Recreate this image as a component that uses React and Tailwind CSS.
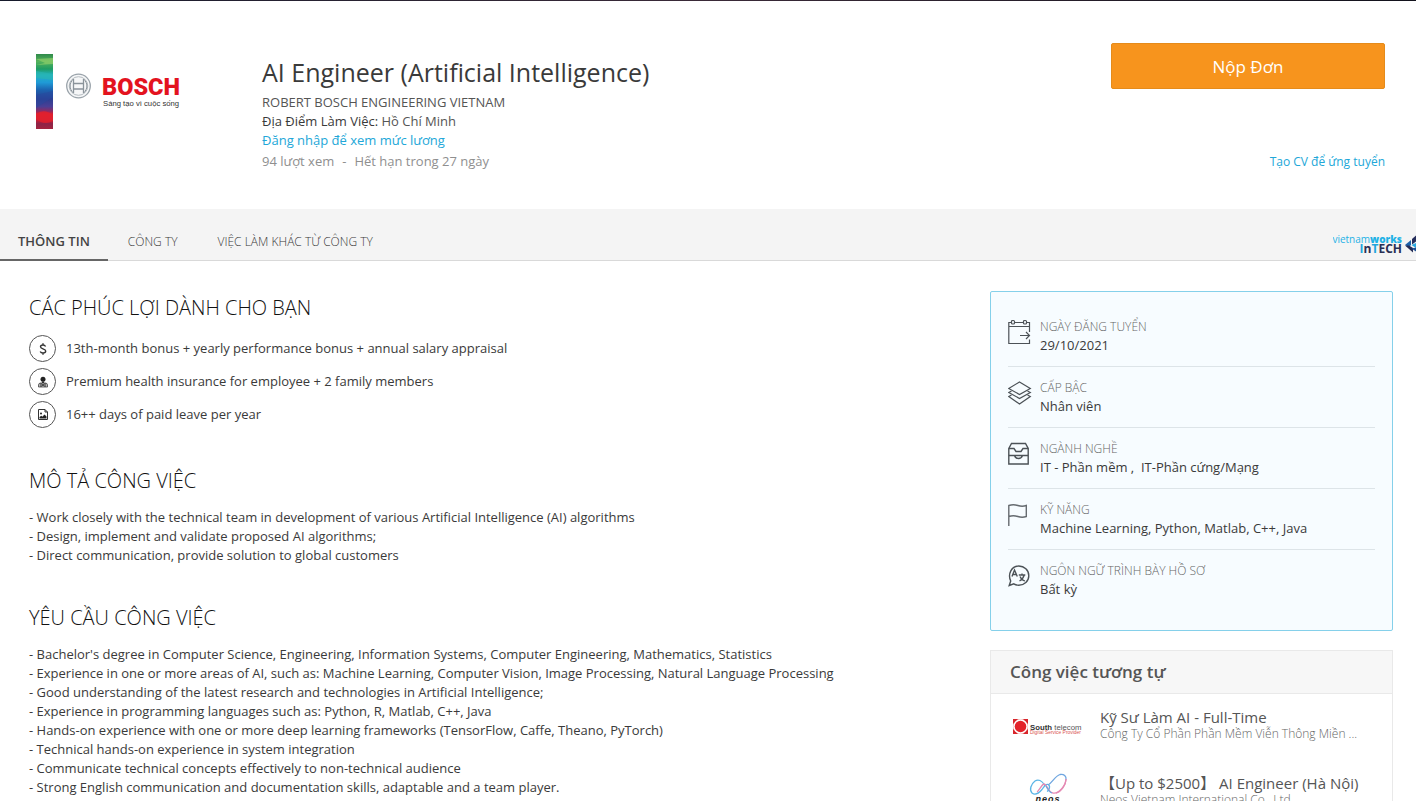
import React from 'react';

const benefits = [
  { icon: 'dollar', text: '13th-month bonus + yearly performance bonus + annual salary appraisal' },
  { icon: 'doctor', text: 'Premium health insurance for employee + 2 family members' },
  { icon: 'picture', text: '16++ days of paid leave per year' },
];

const description = [
  '- Work closely with the technical team in development of various Artificial Intelligence (AI) algorithms',
  '- Design, implement and validate proposed AI algorithms;',
  '- Direct communication, provide solution to global customers',
];

const requirements = [
  "- Bachelor's degree in Computer Science, Engineering, Information Systems, Computer Engineering, Mathematics, Statistics",
  '- Experience in one or more areas of AI, such as: Machine Learning, Computer Vision, Image Processing, Natural Language Processing',
  '- Good understanding of the latest research and technologies in Artificial Intelligence;',
  '- Experience in programming languages such as: Python, R, Matlab, C++, Java',
  '- Hands-on experience with one or more deep learning frameworks (TensorFlow, Caffe, Theano, PyTorch)',
  '- Technical hands-on experience in system integration',
  '- Communicate technical concepts effectively to non-technical audience',
  '- Strong English communication and documentation skills, adaptable and a team player.',
];

const facts = [
  { icon: 'calendar', label: 'NGÀY ĐĂNG TUYỂN', value: '29/10/2021' },
  { icon: 'layers', label: 'CẤP BẬC', value: 'Nhân viên' },
  { icon: 'drawer', label: 'NGÀNH NGHỀ', value: 'IT - Phần mềm ,\u00a0 IT-Phần cứng/Mạng' },
  { icon: 'flag', label: 'KỸ NĂNG', value: 'Machine Learning, Python, Matlab, C++, Java' },
  { icon: 'language', label: 'NGÔN NGỮ TRÌNH BÀY HỒ SƠ', value: 'Bất kỳ' },
];

const similar = [
  { logo: 'south', title: 'Kỹ Sư Làm AI - Full-Time', company: 'Công Ty Cổ Phần Phần Mềm Viễn Thông Miền ...' },
  { logo: 'neos', title: '【Up to $2500】 AI Engineer (Hà Nội)', company: 'Neos Vietnam International Co., Ltd' },
];

function BoschLogo() {
  return (
    <svg width="146" height="76" viewBox="0 0 146 76" role="img" aria-label="Bosch">
      <defs>
        <linearGradient id="ribbon" x1="0" y1="0" x2="0" y2="1">
          <stop offset="0" stopColor="#2f8a4a" />
          <stop offset="0.1" stopColor="#55b25c" />
          <stop offset="0.2" stopColor="#1f9c63" />
          <stop offset="0.28" stopColor="#22b3c4" />
          <stop offset="0.38" stopColor="#1f9ad6" />
          <stop offset="0.48" stopColor="#1c63b0" />
          <stop offset="0.6" stopColor="#2b3f93" />
          <stop offset="0.7" stopColor="#4b3f95" />
          <stop offset="0.76" stopColor="#8a2b66" />
          <stop offset="0.8" stopColor="#d81f35" />
          <stop offset="0.88" stopColor="#c91f38" />
          <stop offset="0.93" stopColor="#8c2348" />
          <stop offset="1" stopColor="#a3243f" />
        </linearGradient>
      </defs>
      <rect width="17" height="75" fill="url(#ribbon)" />
      <path d="M0 5l17 -1v6L0 11l9-2z" fill="#8fce6a" opacity=".7" />
      <path d="M0 17l17 3v6L0 24z" fill="#2ab6b0" opacity=".6" />
      <path d="M0 41l17 -4v6L0 54z" fill="#27479e" opacity=".5" />
      <path d="M0 60q8 -6 17 1v6q-9 5 -17 -2z" fill="#e3202c" opacity=".8" />
      <circle cx="42.500" cy="32" r="11.800" fill="#f6f7f8" stroke="#9aa3aa" strokeWidth="1.300" />
      <circle cx="42.500" cy="32" r="9.300" fill="none" stroke="#b4bbc0" strokeWidth="1" />
      <path d="M37.500 25v14M47.500 25v14M37.500 29.500h10M37.500 35h10" stroke="#8a939a" strokeWidth="1.300" fill="none" />
      <path d="M37.500 25c-4.500 4-4.500 10 0 14M47.500 25c4.500 4 4.500 10 0 14" stroke="#8a939a" strokeWidth="1" fill="none" />
      <text x="66" y="41" fontFamily="Roboto, sans-serif" fontWeight="900" fontSize="23.500" fill="#e3131f">BOSCH</text>
      <text x="67" y="52" fontFamily="Liberation Sans, sans-serif" fontSize="7.700" fill="#333">Sáng tạo vì cuộc sống</text>
    </svg>
  );
}

function InTechLogo() {
  return (
    <svg width="83" height="24" viewBox="0 0 83 24" role="img" aria-label="vietnamworks InTECH">
      <text x="69" y="9" textAnchor="end" fontFamily="Open Sans, sans-serif" fontSize="10" fill="#1fb2e6">
        vietnam<tspan fontWeight="800">works</tspan>
      </text>
      <text x="69" y="19" textAnchor="end" fontFamily="Open Sans, sans-serif" fontWeight="700" fontSize="12" fill="#2a2f55">
        <tspan fill="#1fa5dd">I</tspan>n<tspan fill="#1fa5dd">T</tspan>ECH
      </text>
      <path d="M72 11l6 -5v5l-2 2z" fill="#1d62ab" />
      <path d="M72 11.500l8 7v-4.500l-4 -2.500z" fill="#232b55" />
      <path d="M79 5l4 -3.500v6l-4 3z" fill="#262e5c" />
      <path d="M78.500 11l4.500 -2v5z" fill="#2aa8e0" />
      <path d="M78.500 14.500l4.500 3v-4z" fill="#1d4f93" />
    </svg>
  );
}

function BenefitIcon({ name }) {
  if (name === 'dollar') {
    return (
      <svg width="12" height="14" viewBox="0 0 12 14" fill="none" stroke="#333" strokeWidth="1.4" aria-hidden="true">
        <path d="M8.600 4.500C8 3.400 7 3 6 3 4.600 3 3.500 3.600 3.500 4.800 3.500 7.400 8.700 6.300 8.700 9.100 8.700 10.400 7.400 11 6 11 4.700 11 3.700 10.600 3.200 9.500M6 1.200v2M6 11v1.800" />
      </svg>
    );
  }
  if (name === 'doctor') {
    return (
      <svg width="12" height="12" viewBox="0 0 12 12" aria-hidden="true">
        <circle cx="6" cy="3.200" r="2.500" fill="#222" />
        <path d="M5 5.500h2v2H5z" fill="#222" />
        <path d="M1.500 11V9q0-1.800 2-2h5q2 .2 2 2v2z" fill="#bbb" stroke="#444" strokeWidth=".8" />
        <path d="M4 7v4M8 7v4M5 9h2M6 8v2" stroke="#222" strokeWidth=".9" />
      </svg>
    );
  }
  return (
    <svg width="12" height="13" viewBox="0 0 12 13" fill="none" stroke="#333" aria-hidden="true">
      <path d="M1.500 1.500h6.500l2.500 2.500v7.500h-9zM8 1.500V4h2.500" />
      <path d="M2.500 10.500V9l1.800-1.200 1 1 2.200-2.300L9.500 8.500v2z" fill="#222" stroke="none" />
      <circle cx="4" cy="5.500" r="1" fill="#222" stroke="none" />
    </svg>
  );
}

function FactIcon({ name }) {
  const common = { width: 24, height: 26, viewBox: '0 0 24 26', fill: 'none', stroke: '#4c5257', strokeWidth: 1.2, 'aria-hidden': true };
  switch (name) {
    case 'calendar':
      return (
        <svg {...common}>
          <path d="M3.500 3.500H.8v21h20.700v-4M21.500 13V3.500h-2.500M7 3.500h8M.8 7.500h20.700" />
          <rect x="3.500" y="1.500" width="3" height="3.500" rx="1" />
          <rect x="15.500" y="1.500" width="3" height="3.500" rx="1" />
          <path d="M12 16.500h9M18 13l3.500 3.500L18 20" />
        </svg>
      );
    case 'layers':
      return (
        <svg {...common}>
          <path d="M11.500 2l10.800 6.500-10.800 6-10.800-6z" />
          <path d="M3.500 11L.8 12.500l10.700 6 10.800-6-2.800-1.500" />
          <path d="M3.500 15L.8 16.500l10.700 7.500 10.800-7.500-2.800-1.500" />
        </svg>
      );
    case 'drawer':
      return (
        <svg {...common} strokeWidth="1.400">
          <path d="M.8 7.500L3.500 2.500h14l2.700 5v15.500H.8z" />
          <path d="M.8 7.500h5.200l2 3h5l2-3h5.200M.8 14.500h19.400M6.500 14.500q1 3 4 3t4-3" />
        </svg>
      );
    case 'flag':
      return (
        <svg {...common} strokeWidth="1.400" stroke="#666b70">
          <path d="M.8 24V3.500q4.500-1.500 9 0t8.500 0v11q-4 1.500-8.500 0t-9 0" />
        </svg>
      );
    default:
      return (
        <svg {...common} strokeWidth="1.400">
          <path d="M1.200 22.500l1.500-4.500C-.5 11 3.500 3 10.800 3c5.500 0 10 4.300 10 9.700s-4.500 9.500-10 9.500c-2 0-3.500-.3-5-1.300z" />
          <path d="M4 13.500L6.500 7l2.800 6.500M5 11.500h3.400" />
          <path d="M10.800 12h6.500M14 10.500V12M16.200 12q-1 4-4.700 6M12 13.500q1.500 3.500 5 4.500" strokeWidth="1.300" />
        </svg>
      );
  }
}

function CompanyLogo({ name }) {
  if (name === 'south') {
    return (
      <svg width="70" height="18" viewBox="0 0 70 18" role="img" aria-label="South telecom">
        <rect x="0" y="1" width="15" height="15" fill="#f0a3a0" />
        <path d="M0 1h5L0 6zM15 1v5l-5-5zM0 16v-5l5 5zM15 16h-5l5-5z" fill="#d8252b" />
        <circle cx="7.500" cy="8.500" r="7.200" fill="#fff" />
        <circle cx="7.500" cy="8.500" r="5.800" fill="#e3232a" />
        <text x="17" y="12" fontFamily="Liberation Sans, sans-serif" fontSize="7.800" fill="#555">
          <tspan fontWeight="700" fill="#333">South</tspan> telecom
        </text>
        <text x="17" y="16" fontFamily="Liberation Sans, sans-serif" fontSize="4.900" fill="#d9534f">Digital Service Provider</text>
      </svg>
    );
  }
  return (
    <svg width="44" height="40" viewBox="0 0 44 40" role="img" aria-label="neos">
      <g fill="none" strokeWidth="1.300">
        <path d="M19 13C16 7 12 6 9 8c-4 3-6 9-3 12 3 2.500 7 0 10-3.500 2-3 4-6 6-5 3 1 1 6-1 7" stroke="#5bb5e6" />
        <path d="M11 19c2-1 5-8 7-8 3 0 4 8 9 9 6 1 13-8 13-14" stroke="#e58bb4" />
        <path d="M20 13c2 4 3 6 6 7M22 12c4-2 7-9 12-10.500 4-.8 6.500 2 6 5" stroke="#6fa6e0" />
        <path d="M40 6c0 6-5 13-10 14" stroke="#e58bb4" />
      </g>
      <text x="22" y="29" textAnchor="middle" fontFamily="Liberation Sans, sans-serif" fontStyle="italic" fontWeight="700" fontSize="9" letterSpacing="1" fill="#222">neos</text>
    </svg>
  );
}

function SectionTitle({ children }) {
  return <h2 className="mb-[13px] text-[20px] leading-7 font-light text-[#111]">{children}</h2>;
}

export default function App() {
  return (
    <div className="h-screen overflow-hidden bg-white font-['Open_Sans','Noto_Sans_CJK_JP',sans-serif] text-[13px] leading-[19px] text-[#3a3a3a]">
      <div className="h-px bg-linear-to-r from-[#161a2b] via-[#3a2a38] to-[#12121c]" />

      <header className="flex h-[208px] items-start pr-[31px] pl-9">
        <div className="w-[226px] shrink-0 pt-[53px]">
          <BoschLogo />
        </div>
        <div className="min-w-0 flex-1 pt-[54px]">
          <h1 className="mb-1 text-[25px] leading-[34px]">AI Engineer (Artificial Intelligence)</h1>
          <p className="text-[#555]">ROBERT BOSCH ENGINEERING VIETNAM</p>
          <p>Địa Điểm Làm Việc: <span className="text-[#555]">Hồ Chí Minh</span></p>
          <p><a href="#login" className="text-[#22a7d8]">Đăng nhập để xem mức lương</a></p>
          <p className="mt-0.5 flex gap-2 text-[#8f8f8f]">
            <span>94 lượt xem</span>
            <span>-</span>
            <span>Hết hạn trong 27 ngày</span>
          </p>
        </div>
        <div className="flex w-[274px] shrink-0 flex-col items-end pt-[42px]">
          <button type="button" className="h-[46px] w-full rounded-xs border border-[#e58b1b] bg-[#f7941d] text-[17px] text-white">Nộp Đơn</button>
          <a href="#cv" className="mt-[63px] text-[12px] text-[#22a7d8]">Tạo CV để ứng tuyển</a>
        </div>
      </header>

      <nav className="flex h-[52px] items-end justify-between border-b border-[#d9d9d9] bg-[#f4f4f4]">
        <div className="-mb-px flex">
          <a href="#info" className="border-b-2 border-[#666] px-[18px] pb-2 font-semibold text-[#444]">THÔNG TIN</a>
          <a href="#company" className="border-b-2 border-transparent px-5 pb-2 text-[12px] font-light">CÔNG TY</a>
          <a href="#jobs" className="border-b-2 border-transparent px-5 pb-2 text-[12px] font-light">VIỆC LÀM KHÁC TỪ CÔNG TY</a>
        </div>
        <div className="pb-0.5">
          <InTechLogo />
        </div>
      </nav>

      <div className="flex items-start justify-between pr-[23px] pl-[29px]">
        <main className="flex min-w-0 flex-1 flex-col gap-[39px] pt-[33px]">
          <section>
            <SectionTitle>CÁC PHÚC LỢI DÀNH CHO BẠN</SectionTitle>
            <ul className="flex flex-col gap-1.5">
              {benefits.map((b) => (
                <li key={b.text} className="flex items-center gap-2.5">
                  <span className="flex size-[27px] shrink-0 items-center justify-center rounded-full border border-[#555]">
                    <BenefitIcon name={b.icon} />
                  </span>
                  {b.text}
                </li>
              ))}
            </ul>
          </section>
          <section>
            <SectionTitle>MÔ TẢ CÔNG VIỆC</SectionTitle>
            {description.map((line) => <p key={line}>{line}</p>)}
          </section>
          <section>
            <SectionTitle>YÊU CẦU CÔNG VIỆC</SectionTitle>
            {requirements.map((line) => <p key={line}>{line}</p>)}
          </section>
        </main>

        <aside className="flex w-[403px] shrink-0 flex-col gap-[19px] pt-[30px]">
          <dl className="rounded-xs border border-[#85d0ea] bg-[#f7fcff] px-[17px] pt-[14px] pb-5">
            {facts.map((f) => (
              <div key={f.label} className="flex items-start gap-2 border-b border-[#dde4e8] py-[11px] last:border-b-0">
                <span className="h-[38px] w-6 shrink-0 pt-0.5">
                  <FactIcon name={f.icon} />
                </span>
                <div>
                  <dt className="text-[12px] font-light text-[#666]">{f.label}</dt>
                  <dd>{f.value}</dd>
                </div>
              </div>
            ))}
          </dl>

          <section className="border border-[#e9e9e9] pb-6">
            <h3 className="border-b border-[#e9e9e9] bg-[#f7f7f7] px-[19px] py-[9px] text-[17px] leading-6 font-semibold text-[#555]">Công việc tương tự</h3>
            <ul className="flex flex-col gap-[31px] pt-[15px]">
              {similar.map((job) => (
                <li key={job.title} className="flex h-[35px] items-center pl-[22px]">
                  <span className="flex w-[70px] shrink-0 justify-center">
                    <CompanyLogo name={job.logo} />
                  </span>
                  <div className="min-w-0 self-start pl-[17px]">
                    <a href="#job" className="block text-[15px] leading-[17px] text-[#555]">{job.title}</a>
                    <p className="text-[12px] leading-4 font-light text-[#666]">{job.company}</p>
                  </div>
                </li>
              ))}
            </ul>
          </section>
        </aside>
      </div>
    </div>
  );
}
